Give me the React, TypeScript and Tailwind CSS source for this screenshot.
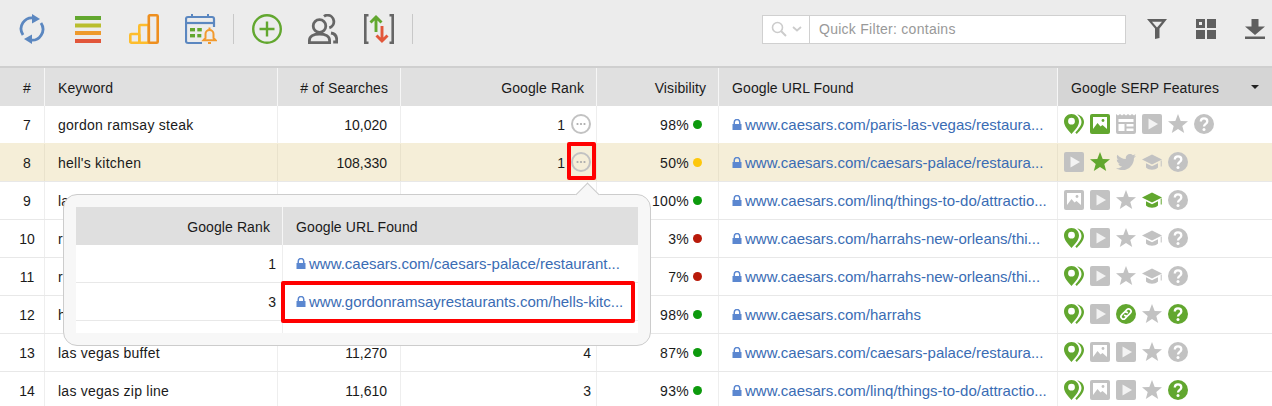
import React from 'react';
import { FaTwitter } from 'react-icons/fa';

const GREEN = '#62a72f';
const GRAY = '#c2c2c2';

const Pin = ({ c = GREEN }: { c?: string }) => (
  <svg width="20" height="20" viewBox="0 0 20 20">
    <path fillRule="evenodd" fill={c} d="M7.5 0C3.3 0 0 3.3 0 7.4 0 12 4 16 7.5 20 11 16 15 12 15 7.4 15 3.3 11.7 0 7.5 0zM7.5 3.800a3.400 3.400 0 1 1 0 6.800 3.400 3.400 0 0 1 0-6.800z" />
    <path fill={c} d="M13.2.4C17.2 1 20 4.200 20 8c0 4.200-3.800 8.300-7.200 12l-1.500-1.500c3-3.400 6.200-7 6.200-10.500 0-3-1.800-5.600-4.300-7.600z" />
  </svg>
);

const Img = ({ c = GRAY }: { c?: string }) => (
  <svg width="20" height="20" viewBox="0 0 20 20">
    <rect width="20" height="20" rx="2" fill={c} />
    <rect x="3" y="3" width="14" height="14" fill="#fff" />
    <circle cx="13" cy="6.500" r="1.400" fill={c} />
    <path fill={c} d="M3 15l4.500-6 3 3.500 2-1.500 4.500 4v2H3z" />
  </svg>
);

const Video = () => (
  <svg width="20" height="20" viewBox="0 0 20 20">
    <rect width="20" height="20" rx="2" fill={GRAY} />
    <path d="M6.500 4.500L16 10l-9.500 5.500z" fill="#fff" fillOpacity="0.8" />
  </svg>
);

const Star = ({ c = GRAY }: { c?: string }) => (
  <svg width="20" height="20" viewBox="0 0 20 20">
    <path fill={c} d="M10 0l2.700 6.900 7.300.4-5.700 4.600 1.900 7.100L10 15.100 3.800 19l1.900-7.100L0 7.300l7.300-.4z" />
  </svg>
);

const Help = ({ c = GRAY }: { c?: string }) => (
  <svg width="20" height="20" viewBox="0 0 20 20">
    <circle cx="10" cy="10" r="10" fill={c} />
    <path d="M6.800 7.600C6.800 5.600 8.300 4.400 10 4.400c2 0 3.300 1.300 3.300 3 0 2.300-3.300 2.600-3.300 5" fill="none" stroke="#fff" strokeWidth="2.300" />
    <circle cx="10" cy="15.400" r="1.500" fill="#fff" />
  </svg>
);

const Cap = ({ c = GRAY }: { c?: string }) => (
  <svg width="20" height="20" viewBox="0 0 20 20">
    <path fill={c} d="M10 2.500L20 7.500l-10 5-10-5z" />
    <path fill={c} d="M4 11.300l6 3 6-3v4.200c-1.500 1.500-3.800 2.200-6 2.200s-4.500-.7-6-2.200z" />
    <path fill={c} d="M18.700 8.500h1v6h-1z" />
  </svg>
);

const Tw = () => (
  <span className="flex w-5 h-5 items-center justify-center text-[#c2c2c2]">
    <FaTwitter size={20} />
  </span>
);

const News = () => (
  <svg width="20" height="20" viewBox="0 0 20 20">
    <path fill={GRAY} d="M0 0l2 1.500L4 0l2 1.500L8 0l2 1.500L12 0l2 1.500L16 0l2 1.500L20 0v18a2 2 0 0 1-2 2H2a2 2 0 0 1-2-2z" />
    <rect x="2.500" y="5" width="15" height="3" fill="#fff" />
    <rect x="2.500" y="10" width="6" height="7" fill="#fff" />
    <rect x="10.500" y="10" width="7" height="2.500" fill="#fff" />
    <rect x="10.500" y="14.500" width="7" height="2.500" fill="#fff" />
  </svg>
);

const LinkBadge = () => (
  <svg width="20" height="20" viewBox="0 0 20 20">
    <circle cx="10" cy="10" r="10" fill={GREEN} />
    <g fill="none" stroke="#fff" strokeWidth="1.700" strokeLinecap="round">
      <path d="M9 7.500l1.800-1.800a2.400 2.400 0 0 1 3.500 3.500l-2.200 2.200a2.400 2.400 0 0 1-3.400 0" />
      <path d="M11 12.500l-1.800 1.800a2.400 2.400 0 0 1-3.500-3.500l2.200-2.200a2.400 2.400 0 0 1 3.400 0" />
    </g>
  </svg>
);

const Lock = () => (
  <svg width="10" height="11" viewBox="0 0 10 11" className="shrink-0 -mt-[1px]">
    <path fill="#5b87d0" fillRule="evenodd" d="M.5 5h1V3.300a3.500 3.500 0 0 1 7 0V5h1v6H.5zM3 5h4V3.300a2 2 0 0 0-4 0z" />
  </svg>
);

const More = () => (
  <svg width="20" height="20" viewBox="0 0 20 20">
    <circle cx="10" cy="10" r="9" fill="none" stroke="#c2c2c2" strokeWidth="2" />
    <circle cx="6.500" cy="10" r="1.100" fill="#aaa" />
    <circle cx="10" cy="10" r="1.100" fill="#aaa" />
    <circle cx="13.500" cy="10" r="1.100" fill="#aaa" />
  </svg>
);

const Sep = () => <div className="w-px h-[30px] bg-[#c8c8c8]" />;

const pin = <Pin />;
const img = <Img />;
const vid = <Video />;
const star = <Star />;
const help = <Help />;
const cap = <Cap />;

type Row = {
  n: number;
  kw: string;
  searches?: string;
  rank?: string;
  more?: boolean;
  vis: string;
  dot: string;
  url: string;
  serp: React.ReactNode[];
};

const rows: Row[] = [
  { n: 7, kw: 'gordon ramsay steak', searches: '10,020', rank: '1', more: true, vis: '98%', dot: '#0d9a0d', url: 'www.caesars.com/paris-las-vegas/restaura...', serp: [pin, <Img c={GREEN} />, <News />, vid, star, help] },
  { n: 8, kw: "hell's kitchen", searches: '108,330', rank: '1', more: true, vis: '50%', dot: '#fdc70c', url: 'www.caesars.com/caesars-palace/restaura...', serp: [vid, <Star c={GREEN} />, <Tw />, cap, help] },
  { n: 9, kw: 'la', vis: '100%', dot: '#0d9a0d', url: 'www.caesars.com/linq/things-to-do/attractio...', serp: [img, vid, star, <Cap c={GREEN} />, help] },
  { n: 10, kw: 'r', vis: '3%', dot: '#b81a0a', url: 'www.caesars.com/harrahs-new-orleans/thi...', serp: [pin, vid, star, cap, help] },
  { n: 11, kw: 'r', vis: '7%', dot: '#b81a0a', url: 'www.caesars.com/harrahs-new-orleans/thi...', serp: [pin, vid, star, cap, help] },
  { n: 12, kw: 'h', vis: '98%', dot: '#0d9a0d', url: 'www.caesars.com/harrahs', serp: [pin, vid, <LinkBadge />, star, <Help c={GREEN} />] },
  { n: 13, kw: 'las vegas buffet', searches: '11,270', rank: '4', vis: '87%', dot: '#0d9a0d', url: 'www.caesars.com/caesars-palace/restaura...', serp: [pin, img, vid, star, help] },
  { n: 14, kw: 'las vegas zip line', searches: '11,610', rank: '3', vis: '93%', dot: '#0d9a0d', url: 'www.caesars.com/linq/things-to-do/attractio...', serp: [pin, img, vid, star, <Help c={GREEN} />] },
];

export default function App() {
  return (
    <div className="relative w-[1272px] h-[406px] overflow-hidden bg-white text-[14px] text-[#1a1a1a] font-['Liberation_Sans',Arial,sans-serif]">
      {/* toolbar */}
      <div className="h-[68px] bg-[#ececec] border-b-2 border-[#cfcfcf] flex items-center pb-[8px] pl-[19px]">
        <svg width="26" height="30" viewBox="0 0 26 30" fill="none">
          <path d="M15 4A11 11 0 0 0 4 21" stroke="#5b87c0" strokeWidth="2.800" />
          <path d="M11 26A11 11 0 0 0 22 9" stroke="#5b87c0" strokeWidth="2.800" />
          <path d="M13 0l8 5-8 4.500z" fill="#5b87c0" />
          <path d="M13 30l-8-5 8-4.500z" fill="#5b87c0" />
        </svg>
        <svg className="ml-[30px]" width="26" height="28" viewBox="0 0 26 28">
          <rect y="1" width="26" height="4" fill="#62a72f" />
          <rect y="8.500" width="26" height="4" fill="#b9be2e" />
          <rect y="16" width="26" height="4" fill="#ee9a2c" />
          <rect y="24" width="26" height="4" fill="#e2563a" />
        </svg>
        <svg className="ml-[28px]" width="30" height="30" viewBox="0 0 30 30" fill="none" strokeWidth="2.600">
          <rect x="1.300" y="20" width="9" height="8.700" rx="1" stroke="#fdbd2d" />
          <rect x="10.300" y="11" width="9.500" height="17.700" rx="1" stroke="#fdbd2d" />
          <rect x="19.800" y="1.300" width="8.900" height="27.400" rx="1" stroke="#ee8f1f" />
        </svg>
        <svg className="ml-[26px]" width="32" height="31" viewBox="0 0 32 31" fill="none">
          <path d="M17 29H3a2 2 0 0 1-2-2V5a2 2 0 0 1 2-2h24a2 2 0 0 1 2 2v8" stroke="#5b87c0" strokeWidth="2.200" />
          <path d="M1 9h28" stroke="#5b87c0" strokeWidth="2.200" />
          <path d="M7 0v4M23 0v4" stroke="#5b87c0" strokeWidth="2" />
          <g fill="#62a72f">
            <rect x="5" y="14" width="5" height="3.400" /><rect x="12.300" y="14" width="4.500" height="3.400" />
            <rect x="5" y="20" width="5" height="3.400" /><rect x="12.300" y="20" width="4" height="3.400" />
          </g>
          <path d="M24.500 16a4 4 0 0 1 4 4v4l2 2.200h-12l2-2.200v-4a4 4 0 0 1 4-4z" stroke="#f29a2e" strokeWidth="2" fill="#ececec" />
          <path d="M24.500 13.500v2M23 29h3" stroke="#f29a2e" strokeWidth="2" />
        </svg>
        <div className="ml-[16px]"><Sep /></div>
        <svg className="ml-[18px]" width="30" height="30" viewBox="0 0 30 30" fill="none" stroke="#62a72f" strokeWidth="2.400">
          <circle cx="15" cy="15" r="13.800" />
          <path d="M15 7.500v15M7.500 15h15" strokeWidth="2.400" />
        </svg>
        <svg className="ml-[26px]" width="30" height="30" viewBox="0 0 30 30" fill="none" stroke="#666" strokeWidth="2.800">
          <circle cx="11.500" cy="12" r="6.300" />
          <path d="M1.400 28.600v-2.100c0-4 4-6.500 10.100-6.500s10.100 2.500 10.100 6.500v2.100z" />
          <path d="M16 2.300c1-.8 2.200-1.100 3.300-1.100a6.500 6.500 0 0 1 2 12.700" />
          <path d="M23 19c3.700.6 5.700 3 5.700 6.500v2.500h-3.500" />
        </svg>
        <svg className="ml-[26px]" width="30" height="30" viewBox="0 0 30 30" fill="none">
          <path d="M4.500 1.300H1.300v27.400h3.200M25.500 1.300h3.200v27.400h-3.200" stroke="#666" strokeWidth="2.600" />
          <path d="M12 18V3M6.500 8.500L12 3l5.500 5.500" stroke="#62a72f" strokeWidth="2.900" />
          <path d="M18 12v15M12.500 21.500L18 27l5.500-5.500" stroke="#e2563a" strokeWidth="2.900" />
        </svg>
        <div className="ml-[18px]"><Sep /></div>
        <div className="ml-[349px] w-[364px] h-[29px] bg-white border border-[#d0d0d0] flex items-center text-[#999] shrink-0">
          <div className="w-[47px] h-full border-r border-[#d0d0d0] flex items-center pl-[8px] gap-[5px] shrink-0">
            <svg width="16" height="16" viewBox="0 0 16 16" fill="none" stroke="#ccc" strokeWidth="1.600">
              <circle cx="6.500" cy="6.500" r="5" /><path d="M10 10l5 5" strokeWidth="2" />
            </svg>
            <svg width="10" height="6" viewBox="0 0 10 6" fill="none" stroke="#ccc" strokeWidth="1.800"><path d="M1 1l4 3.500L9 1" /></svg>
          </div>
          <span className="pl-[9px] pt-px tracking-[0.27px]">Quick Filter: contains</span>
        </div>
        <svg className="ml-[21px] shrink-0" width="20" height="20" viewBox="0 0 20 20" fill="#5f5f5f">
          <path fillRule="evenodd" d="M0 0h20l-7.500 9.500V19L8 20V9.500zM5 2.800l5 5.700 5-5.700z" />
        </svg>
        <svg className="ml-[29px] shrink-0" width="20" height="20" viewBox="0 0 20 20" fill="#5f5f5f">
          <path fillRule="evenodd" d="M0 0h9v9H0zM3 3v3h3V3z" />
          <rect x="11" width="9" height="9" /><rect y="11" width="9" height="9" /><rect x="11" y="11" width="9" height="9" />
        </svg>
        <svg className="ml-[29px] shrink-0" width="20" height="20" viewBox="0 0 20 20" fill="#5f5f5f">
          <path d="M6.500 0h7v7.500H20L10 16 0 7.500h6.500z" /><rect y="17.500" width="20" height="2.500" />
        </svg>
      </div>

      {/* header */}
      <div className="flex h-[38px] bg-[#e0e0e0] items-center divide-x divide-[#f6f6f6] tracking-[0.1px]">
        <div className="w-[45px] h-full flex items-center justify-center pl-[10px] pt-[2px]">#</div>
        <div className="w-[233px] h-full flex items-center pl-[13px] pt-[2px]">Keyword</div>
        <div className="w-[123px] h-full flex items-center justify-end pr-[12px] pt-[2px]">
          # of Searches
        </div>
        <div className="w-[196px] h-full flex items-center justify-end pr-[12px] pt-[2px]">Google Rank</div>
        <div className="w-[122px] h-full flex items-center justify-end pr-[12px] pt-[2px]">Visibility</div>
        <div className="w-[339px] h-full flex items-center pl-[13px] pt-[2px]">Google URL Found</div>
        <div className="w-[214px] h-full flex items-center justify-between pl-[13px] pr-[13px] pt-[2px] bg-[#d5d5d5]">
          <span>Google SERP Features</span>
          <span className="w-0 h-0 border-x-[4px] border-x-transparent border-t-[4px] border-t-[#222] -mt-[2px]" />
        </div>
      </div>

      {/* rows */}
      {rows.map((r) => (
        <div key={r.n} className={`flex h-[38px] items-center border-b divide-x ${r.n === 8 ? 'bg-[#f5eed8] divide-[#e9e2cc]' : 'divide-[#eeeeee]'} ${r.n === 7 ? 'border-[#f5eed8]' : 'border-[#e8e8e8]'}`}>
          <div className="w-[45px] h-full flex items-center justify-center pl-[10px] pt-[2px]">{r.n}</div>
          <div className="w-[233px] h-full flex items-center pl-[13px] pt-[2px] tracking-[0.25px]">{r.kw}</div>
          <div className="w-[123px] h-full flex items-center justify-end pr-[13px] pt-[2px]">{r.searches}</div>
          <div className="w-[196px] h-full flex items-center justify-end pr-[5px] gap-[6px]">
            <span className="pt-[2px]">{r.rank}</span>
            {r.more && (
              <span className="relative flex -mt-[1px]">
                <More />
                {r.n === 8 && <span className="absolute -left-[4px] -right-[5px] -top-[10px] -bottom-[8px] border-[4px] border-[#ff0000] rounded-[2px]" />}
              </span>
            )}
          </div>
          <div className="w-[122px] h-full flex items-center justify-end pr-[16px] gap-[3px]">
            <span className="pt-[2px] tracking-[0.3px]">{r.vis}</span>
            <span className="w-[9px] h-[9px] rounded-full ml-[1px]" style={{ backgroundColor: r.dot }} />
          </div>
          <div className="w-[339px] h-full flex items-center pl-[13px] gap-[3px] text-[15px] text-[#3a6cb4]">
            <Lock />
            <span className="whitespace-nowrap pt-[1px]">{r.url}</span>
          </div>
          <div className="w-[214px] h-full flex items-center pl-[6px] pb-[2px] gap-[6px]">
            {r.serp.map((icon, i) => <span key={i} className="flex">{icon}</span>)}
          </div>
        </div>
      ))}

      {/* rank popover */}
      <div className="absolute left-[63px] top-[194px] w-[588px] h-[152px] p-[12px] bg-[#f7f7f7] border border-[#cccccc] rounded-[14px]">
        <span className="absolute left-[515px] -top-[9px] w-[17px] h-[17px] rotate-45 bg-[#f7f7f7] border-l border-t border-[#cccccc]" />
        <div className="relative bg-white h-[126px]">
          <div className="flex h-[38px] bg-[#dfdfdf] tracking-[0.1px]">
            <div className="w-[207px] flex items-center justify-end pr-[12px] pt-[2px] border-r border-[#f6f6f6]">Google Rank</div>
            <div className="flex-1 flex items-center pl-[13px] pt-[2px]">Google URL Found</div>
          </div>
          <div className="flex h-[38px] border-b border-[#e8e8e8]">
            <div className="w-[207px] flex items-center justify-end pr-[6px] pt-[2px] border-r border-[#eeeeee]">1</div>
            <div className="flex-1 flex items-center pl-[13px] gap-[3px] text-[15px] text-[#3a6cb4]"><Lock /><span className="whitespace-nowrap pt-[1px]">www.caesars.com/caesars-palace/restaurant...</span></div>
          </div>
          <div className="flex h-[38px] border-b border-[#e8e8e8]">
            <div className="w-[207px] flex items-center justify-end pr-[6px] pt-[2px] border-r border-[#eeeeee]">3</div>
            <div className="relative flex-1 flex items-center pl-[13px] gap-[3px] text-[15px] text-[#3a6cb4]">
              <Lock /><span className="whitespace-nowrap pt-[1px]">www.gordonramsayrestaurants.com/hells-kitc...</span>
              <span className="absolute -left-[2px] right-[3px] -top-[2px] -bottom-[3px] border-[4px] border-[#ff0000] rounded-[2px]" />
            </div>
          </div>
          <div className="h-[12px] ml-[206px] border-l border-[#eeeeee]" />
        </div>
      </div>
    </div>
  );
}
